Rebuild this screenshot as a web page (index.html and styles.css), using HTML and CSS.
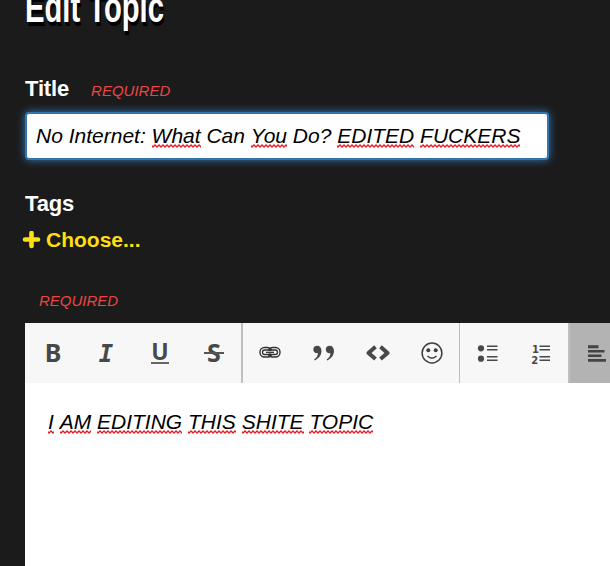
FILE: index.html
```html
<!DOCTYPE html>
<html lang="en">
<head>
<meta charset="utf-8">
<title>Edit Topic</title>
<link rel="stylesheet" href="styles.css">
</head>
<body>
<main class="page">
  <h1 class="heading"><span class="heading-text">Edit Topic</span></h1>
  <div class="label-row"><label class="label" for="title">Title</label><span class="required">REQUIRED</span></div>
  <div class="field" id="title"><span class="typed">No Internet: <span class="sp">What</span> Can <span class="sp">You</span> Do? <span class="sp">EDITED</span> <span class="sp">FUCKERS</span></span></div>
  <div class="label tags">Tags</div>
  <a class="choose"><svg class="plus" viewBox="0 0 19 19"><path d="M9.500 2v13M3 8.500h13" stroke="currentColor" stroke-width="4.600" stroke-linecap="round"/></svg>Choose...</a>
  <div class="required body-required">REQUIRED</div>
  <section class="editor">
    <div class="toolbar">
      <div class="group">
        <button class="tool bold">B</button>
        <button class="tool italic">I</button>
        <button class="tool underline"><span>U</span></button>
        <button class="tool strike"><span>S</span></button>
      </div>
      <div class="group wide-rule">
        <button class="tool"><svg width="24" height="24" viewBox="0 0 24 24" fill="none" stroke="#333"><rect x="2" y="6.500" width="12" height="9.500" rx="4.500" stroke-width="1.400"/><rect x="10" y="6.500" width="12" height="9.500" rx="4.500" stroke-width="1.400"/><rect x="4.500" y="9" width="15" height="4.500" rx="2.200" fill="#f7f7f7" stroke-width="1.300"/><path d="M8 11.300h8" stroke-width="1.300"/><path d="M12 7.500v2.500M12 12.500V15" stroke-width="2.500"/></svg></button>
        <button class="tool"><svg width="24" height="24" viewBox="0 0 24 24" fill="#484848"><path id="q" d="M1.300 8.500a4 3.700 0 0 1 4-3.700c2.500 0 4.200 2 4.200 5.100 0 4.300-3 7.700-6.800 9.500l-.6-.8c2.200-1.500 3.600-3.500 3.900-6.300-2.800.4-4.700-1.400-4.700-3.800z"/><use href="#q" x="12.500"/></svg></button>
        <button class="tool"><svg width="24" height="24" viewBox="0 0 24 24" fill="none" stroke="#484848" stroke-width="4" stroke-linejoin="round"><path d="M9.500 5.700 2.500 12l7 6M14.500 5.700l7 6.300-7 6"/></svg></button>
        <button class="tool"><svg width="24" height="24" viewBox="0 0 24 24" fill="none" stroke="#3f3f3f"><circle cx="12" cy="12" r="9.900" stroke-width="1.500"/><circle cx="8.300" cy="9.300" r="2" fill="#3f3f3f" stroke="none"/><circle cx="15.700" cy="9.300" r="2" fill="#3f3f3f" stroke="none"/><path d="M7.500 15q4.500 4.500 9 0" stroke-width="1.500"/></svg></button>
      </div>
      <div class="group thin-rule">
        <button class="tool"><svg width="24" height="24" viewBox="0 0 24 24" fill="#484848"><circle cx="6" cy="7.300" r="3.100"/><circle cx="6" cy="17.700" r="3.100"/><path d="M12 4.500h10.500v1.600H12zM12 8h10.500v1.600H12zM12 15h10.500v1.600H12zM12 18.500h10.500v1.600H12z"/></svg></button>
        <button class="tool"><svg width="24" height="24" viewBox="0 0 24 24" fill="#484848"><text class="num" x="3" y="12">1</text><text class="num" x="2.300" y="22.500">2</text><path d="M10.500 4.500H21v1.600H10.500zM10.500 8H21v1.600H10.500zM10.500 15H21v1.600H10.500zM10.500 18.500H21v1.600H10.500z"/></svg></button>
      </div>
      <div class="group wide-rule active">
        <button class="tool"><svg width="24" height="24" viewBox="0 0 24 24" fill="#444"><path d="M3 4.300h10.500v2.900H3zM3 9h16.500v2.600H3zM3 13.500h13.500v2.600H3zM3 18h18v2.800H3z"/></svg></button>
      </div>
    </div>
    <div class="content"><span class="typed"><span class="sp">I</span> <span class="sp">AM</span> <span class="sp">EDITING</span> <span class="sp">THIS</span> <span class="sp">SHITE</span> <span class="sp">TOPIC</span></span></div>
  </section>
</main>
</body>
</html>
```
FILE: styles.css
```css
* { box-sizing: border-box; }
body { margin: 0; background: #1b1b1b; color: #fff; font-family: "Liberation Sans", Arial, sans-serif; overflow: hidden; }
.page { display: flex; flex-direction: column; height: 566px; padding-left: 25px; }
.heading { margin: -19px 0 0; height: 94px; font-size: 42px; line-height: 54px; font-weight: 700; white-space: nowrap; }
.heading-text { display: inline-block; transform: scaleX(.695); transform-origin: 0 0; text-shadow: 2px 4px 0 #000; }
.label-row { display: flex; align-items: baseline; height: 37px; line-height: 28px; }
.label { font-size: 22px; font-weight: 700; line-height: 28px; letter-spacing: -.15px; }
.required { color: #ed4545; font-size: 15px; font-style: italic; margin-left: 22px; }
.field { width: 524px; height: 48px; border: 2px solid #3276b1; border-radius: 4px; background: #fff; box-shadow: 0 0 8px #337ab7; padding: 0 9px; line-height: 44px; }
.typed { color: #000; font-size: 21px; font-style: italic; white-space: nowrap; }
.sp { display: inline-block; line-height: 24px; height: 27px; background: url("data:image/svg+xml,%3Csvg xmlns='http://www.w3.org/2000/svg' width='4' height='4'%3E%3Cpath d='M-1 1L1 3L3 1L5 3' fill='none' stroke='%23e51c23' stroke-width='1.300'/%3E%3C/svg%3E") 0 20px repeat-x; }
.tags { margin-top: 30px; height: 35px; }
.choose { display: flex; align-items: center; height: 30px; margin-left: -3px; color: #ffdf0f; font-weight: 700; font-size: 21px; }
.plus { width: 19px; height: 19px; margin-right: 5px; }
.body-required { margin: 36px 0 0 14px; height: 32px; line-height: 20px; }
.editor { flex: 1; display: flex; flex-direction: column; background: #fff; overflow: hidden; }
.toolbar { height: 60px; display: flex; background: #f7f7f7; overflow: hidden; }
.group { display: flex; flex: none; }
.wide-rule { border-left: 2px solid #bebebe; }
.thin-rule { border-left: 1px solid #bebebe; }
.active { background: #b3b3b3; flex: 1 1 0; min-width: 0; overflow: hidden; }
.tool { flex: none; width: 54px; height: 60px; padding: 0; border: 0; background: none; color: #484848; display: flex; align-items: center; justify-content: center; font: 700 25px/30px "Noto Sans", sans-serif; }
.bold { padding: 0 0 3px 2px; }
.italic { font: italic 700 24px/30px "DejaVu Sans Mono", monospace; padding-top: 1px; }
.underline span { height: 20px; line-height: 15px; font-size: 23px; border-bottom: 2px solid #666; margin-top: 1px; }
.strike span { position: relative; margin-top: -3px; }
.strike span::after { content: ""; position: absolute; left: -3px; right: -3px; top: 15px; height: 2px; background: #555; }
.num { font: 700 10px "DejaVu Sans", sans-serif; }
.content { padding: 27px 23px; line-height: 24px; }
```
